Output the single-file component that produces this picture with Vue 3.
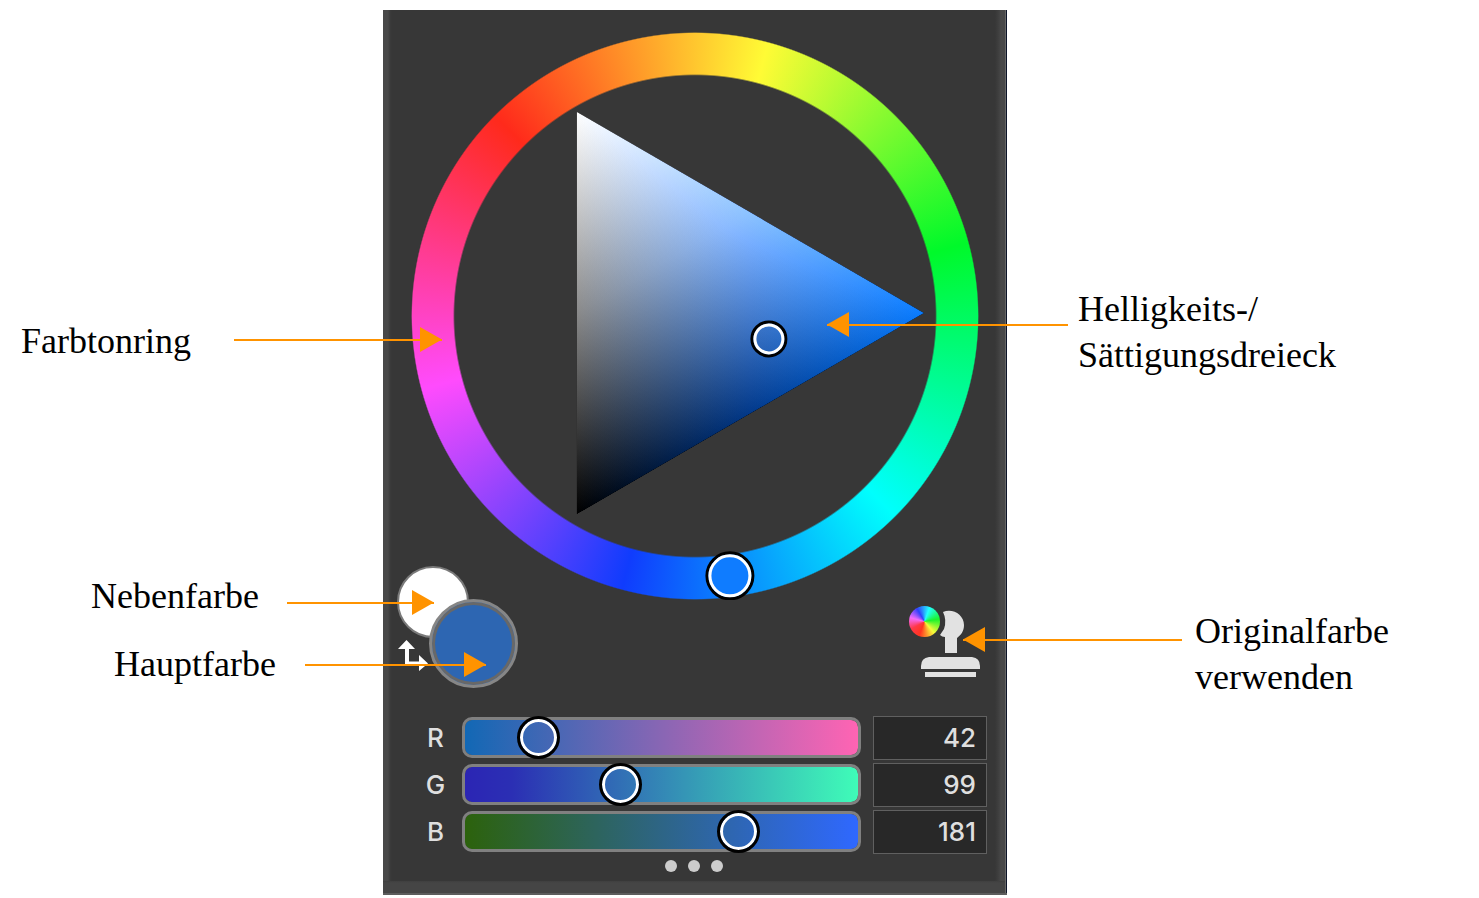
<script setup>
import { reactive, ref } from 'vue'

const channels = reactive([
  { id: 'r', name: 'R', value: 42 },
  { id: 'g', name: 'G', value: 99 },
  { id: 'b', name: 'B', value: 181 },
])

const swapped = ref(false)

const stageWidth = 1479
const pct = (n) => `${(n / stageWidth) * 100}%`

const labels = [
  { lines: ['Farbtonring'], x: 21, y: 318 },
  { lines: ['Nebenfarbe'], x: 91, y: 573 },
  { lines: ['Hauptfarbe'], x: 114, y: 641 },
  { lines: ['Helligkeits-/', 'Sättigungsdreieck'], x: 1078, y: 286 },
  { lines: ['Originalfarbe', 'verwenden'], x: 1195, y: 608 },
]

const arrows = [
  { dir: 'right', from: 234, to: 442, y: 327 },
  { dir: 'right', from: 287, to: 434, y: 590 },
  { dir: 'right', from: 305, to: 486, y: 652 },
  { dir: 'left', from: 827, to: 1068, y: 312 },
  { dir: 'left', from: 963, to: 1182, y: 627 },
]
</script>

<template>
  <main class="stage">
    <section class="panel" aria-label="Farbe">
      <div class="wheel">
        <div class="ring"></div>
        <svg class="triangle" viewBox="0 0 568 568" aria-hidden="true">
          <defs>
            <linearGradient id="hue" gradientUnits="userSpaceOnUse" x1="166" y1="281" x2="513" y2="281">
              <stop offset="0" stop-color="#000" />
              <stop offset="0.5" stop-color="#02398a" />
              <stop offset="1" stop-color="#0a7cff" />
            </linearGradient>
            <linearGradient id="white" gradientUnits="userSpaceOnUse" x1="340" y1="381" x2="166" y2="80">
              <stop offset="0" stop-color="#000" />
              <stop offset="0.5" stop-color="#8a8a8a" />
              <stop offset="1" stop-color="#fff" />
            </linearGradient>
          </defs>
          <g class="mix">
            <path d="M166 80 513 281 166 482Z" fill="url(#hue)" />
            <path class="add" d="M166 80 513 281 166 482Z" fill="url(#white)" />
          </g>
          <g fill="none">
            <circle cx="358" cy="307" r="17" stroke="#000" stroke-width="3" />
            <circle cx="358" cy="307" r="14" stroke="#fff" stroke-width="3" />
            <circle cx="319" cy="544" r="23" stroke="#000" stroke-width="3" />
            <circle cx="319" cy="544" r="20" fill="#0f7cff" stroke="#fff" stroke-width="3" />
          </g>
        </svg>
      </div>

      <div class="tools">
        <div class="swatches">
          <button class="swatch secondary" :class="{ swapped }" aria-label="Nebenfarbe"></button>
          <button class="swatch primary" :class="{ swapped }" aria-label="Hauptfarbe"></button>
          <button class="swap" aria-label="Farben tauschen" @click="swapped = !swapped">
            <svg width="30" height="32" viewBox="0 0 30 32" fill="#fff" aria-hidden="true">
              <path d="M8.500 0 17 9H11V21.500H21V15L30 23.500 21 31V25H7V9H0Z" />
            </svg>
          </button>
        </div>
        <button class="stamp" aria-label="Originalfarbe verwenden">
          <svg width="72" height="72" viewBox="0 0 72 72" fill="#e2e2e2" aria-hidden="true">
            <path d="M34 6C44 2 55 9 55 19C55 25 52 29 48 32V47H36V31Q33 31 31 29L35 23Q38 14 34 6Z" />
            <path d="M12 63V60Q12 52 20 51H63Q71 52 71 60V63Z" />
            <rect x="16" y="66" width="51" height="5" />
          </svg>
          <span class="mini-wheel"></span>
        </button>
      </div>

      <div class="channels">
        <div v-for="c in channels" :key="c.id" class="channel">
          <label :for="c.id">{{ c.name }}</label>
          <div class="track" :class="c.id">
            <input :id="c.id" v-model.number="c.value" type="range" min="0" max="255" />
          </div>
          <input v-model.number="c.value" class="value" type="text" inputmode="numeric" :aria-label="c.name" />
        </div>
      </div>

      <button class="more" aria-label="Mehr"><i></i><i></i><i></i></button>
    </section>

    <p
      v-for="l in labels"
      :key="l.lines[0]"
      class="label"
      :style="{ left: pct(l.x), top: `${l.y}px` }"
    >
      <span v-for="t in l.lines" :key="t">{{ t }}</span>
    </p>
    <div
      v-for="a in arrows"
      :key="a.y"
      class="arrow"
      :class="a.dir"
      :style="{ left: pct(a.from), width: pct(a.to - a.from), top: `${a.y}px` }"
    ></div>
  </main>
</template>

<style>
body {
  margin: 0;
  background: #fff;
}
</style>

<style scoped>
.stage {
  position: relative;
  display: grid;
  grid-template-columns: 383fr 624fr 472fr;
  padding-top: 10px;
  font-family: "Liberation Serif", serif;
}

button {
  padding: 0;
  border: 0;
  background: none;
  cursor: pointer;
}

.panel {
  grid-column: 2;
  box-sizing: border-box;
  display: flex;
  flex-direction: column;
  padding: 22px 0 8px;
  border-bottom: 2px solid #5c5c5c;
  background:
    linear-gradient(#0c1428, #0c1428) right / 1px 100% no-repeat,
    linear-gradient(#666, #666) right 1px top / 1px 100% no-repeat,
    linear-gradient(#3f3f3f, #454545 2px) bottom / 100% 12px no-repeat,
    linear-gradient(90deg, #484848 5px, #3b3b3b 7px, #373737 9px, #373737 calc(100% - 12px), #3e3e3e calc(100% - 9px), #484848 calc(100% - 6px));
}

.wheel {
  position: relative;
  align-self: center;
  width: 91%;
  aspect-ratio: 1;
}

.ring {
  height: 100%;
  border-radius: 50%;
  background: conic-gradient(from 315deg, #ff2a1b, #fffb35 60deg, #00f92a 120deg, #00fffd 180deg, #103cfd 240deg, #ff4bfd 300deg, #ff2a1b);
  mask: radial-gradient(closest-side, transparent 84.600%, #000 85.200%, #000 99.500%, transparent 100%);
}

.triangle {
  position: absolute;
  inset: 0;
  width: 100%;
  height: 100%;
}

.mix {
  isolation: isolate;
}

.add {
  mix-blend-mode: plus-lighter;
}

.tools {
  position: relative;
  display: flex;
  justify-content: space-between;
  align-items: flex-start;
  margin-top: -34px;
  padding: 0 26px 0 14px;
}

.swatches {
  position: relative;
  width: 121px;
  height: 122px;
}

.swatch {
  position: absolute;
  box-sizing: border-box;
  border-radius: 50%;
}

.secondary,
.primary.swapped {
  background-color: #fff;
}

.primary,
.secondary.swapped {
  background-color: #2d66b2;
}

.secondary {
  left: 0;
  top: 0;
  width: 72px;
  height: 72px;
  border: 2px solid #7a7a7a;
}

.primary {
  right: 0;
  bottom: 0;
  width: 89px;
  height: 89px;
  border: 3px solid #868686;
  box-shadow: inset 0 0 0 3px #686868;
}

.swap {
  position: absolute;
  left: 1px;
  top: 74px;
}

.swap svg,
.stamp svg {
  display: block;
}

.stamp {
  position: relative;
  margin-top: 40px;
}

.mini-wheel {
  position: absolute;
  left: 0;
  top: 0;
  width: 31px;
  height: 31px;
  border-radius: 50%;
  background: conic-gradient(from 20deg, #2ff, #1bf32b 60deg, #f6fb3a 120deg, #ff3420 180deg, #ff3848 220deg, #f56bfb 265deg, #3040fb 310deg, #2ff);
}

.channels {
  display: grid;
  gap: 3px;
  margin-top: 28px;
  padding: 0 20px 0 42px;
}

.channel {
  display: grid;
  grid-template-columns: 37px 1fr 114px;
  align-items: center;
  color: #dfdfdf;
  font-family: Inter, sans-serif;
  font-size: 26px;
  font-weight: 500;
  line-height: 32px;
}

.channel label {
  width: 21px;
  text-align: center;
}

.track {
  box-sizing: border-box;
  height: 41px;
  margin-right: 12px;
  border: 3px solid #808080;
  border-radius: 10px;
}

.track.r {
  background: linear-gradient(90deg, #1268b5, #ff64b3) padding-box;
}

.track.g {
  background: linear-gradient(90deg, #2b25b4, #2b2fb4 12%, #3ffcb8) padding-box;
}

.track.b {
  background: linear-gradient(90deg, #2c620c, #2f68ff) padding-box;
}

.track input {
  display: block;
  appearance: none;
  width: calc(100% + 16px);
  height: 43px;
  margin: -4px -8px;
  background: none;
}

.track input::-webkit-slider-thumb {
  appearance: none;
  box-sizing: border-box;
  width: 43px;
  height: 43px;
  border: 3px solid #000;
  border-radius: 50%;
  background: transparent;
  box-shadow: inset 0 0 0 3px #fff;
}

.value {
  box-sizing: border-box;
  width: 100%;
  height: 44px;
  padding: 0 10px;
  border: 1px solid #606060;
  background: #282828;
  color: inherit;
  font: inherit;
  text-align: right;
}

.more {
  align-self: center;
  display: flex;
  gap: 11px;
  margin: 6px 3px 0 0;
  padding-bottom: 13px;
}

.more i {
  width: 12px;
  height: 12px;
  border-radius: 50%;
  background: #ccc;
}

.label {
  position: absolute;
  margin: 0;
  color: #000;
  font-size: 36px;
  line-height: 46px;
  white-space: nowrap;
}

.label span {
  display: block;
}

.arrow {
  position: absolute;
  height: 25px;
  background: linear-gradient(#ff9300, #ff9300) center / 100% 2px no-repeat;
  pointer-events: none;
}

.arrow::after {
  content: "";
  position: absolute;
  top: 0;
  width: 22px;
  height: 25px;
  background: #ff9300;
}

.arrow.right::after {
  right: 0;
  clip-path: polygon(0 0, 100% 50%, 0 100%);
}

.arrow.left::after {
  left: 0;
  clip-path: polygon(100% 0, 0 50%, 100% 100%);
}
</style>
